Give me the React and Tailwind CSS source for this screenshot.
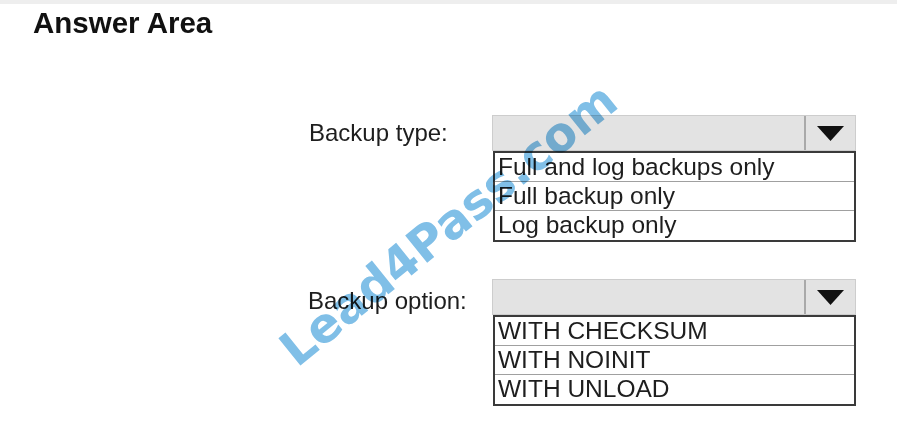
const typeOptions = ["Full and log backups only", "Full backup only", "Log backup only"];
const optionOptions = ["WITH CHECKSUM", "WITH NOINIT", "WITH UNLOAD"];

const Dropdown = ({ items }) => (
    <div className="w-[364px]">
        <div className="h-[36px] flex bg-[#e3e3e3] border border-[#cdcdcd]">
            <div className="flex-1" />
            <div className="w-[51px] border-l-2 border-[#a9a9a9] flex items-center justify-center">
                <svg width="27" height="15" viewBox="0 0 27 15">
                    <polygon points="0,0 27,0 13.5,15" fill="#111" />
                </svg>
            </div>
        </div>
        <div className="ml-[1px] border-2 border-[#3a3a3a] bg-white">
            {items.map((item, i) => (
                <div
                    key={item}
                    className={`h-[29px] flex items-center pl-[3px] text-[24.5px] leading-none text-[#1e1e1e] ${
                        i < items.length - 1 ? "border-b border-[#a0a0a0]" : ""
                    }`}
                >
                    {item}
                </div>
            ))}
        </div>
    </div>
);

const App = () => {
    return (
        <div className="relative w-[897px] h-[432px] overflow-hidden bg-white border-t-4 border-[#eeeeee] font-['Liberation_Sans',Arial,sans-serif]">
            <div className="pl-[33px] pt-[3px] h-[40px] text-[29.5px] font-bold text-[#111] leading-[32px]">
                Answer Area
            </div>

            <div className="mt-[71px] flex">
                <div className="w-[492px] pl-[309px] pt-[4px] text-[24px] text-[#1e1e1e] leading-[28px]">
                    Backup type:
                </div>
                <Dropdown items={typeOptions} />
            </div>

            <div className="mt-[37px] flex">
                <div className="w-[492px] pl-[308px] pt-[8px] text-[24px] text-[#1e1e1e] leading-[28px]">
                    Backup option:
                </div>
                <Dropdown items={optionOptions} />
            </div>

            {/* watermark, multiplied so the text below stays readable */}
            <div className="absolute left-[448px] top-[220px] -translate-x-1/2 -translate-y-1/2 -rotate-[39deg] whitespace-nowrap font-['DejaVu_Sans',sans-serif] text-[48px] font-bold text-[#80bfe7] mix-blend-multiply pointer-events-none">
                Lead4Pass.com
            </div>
        </div>
    );
};

export default App;
